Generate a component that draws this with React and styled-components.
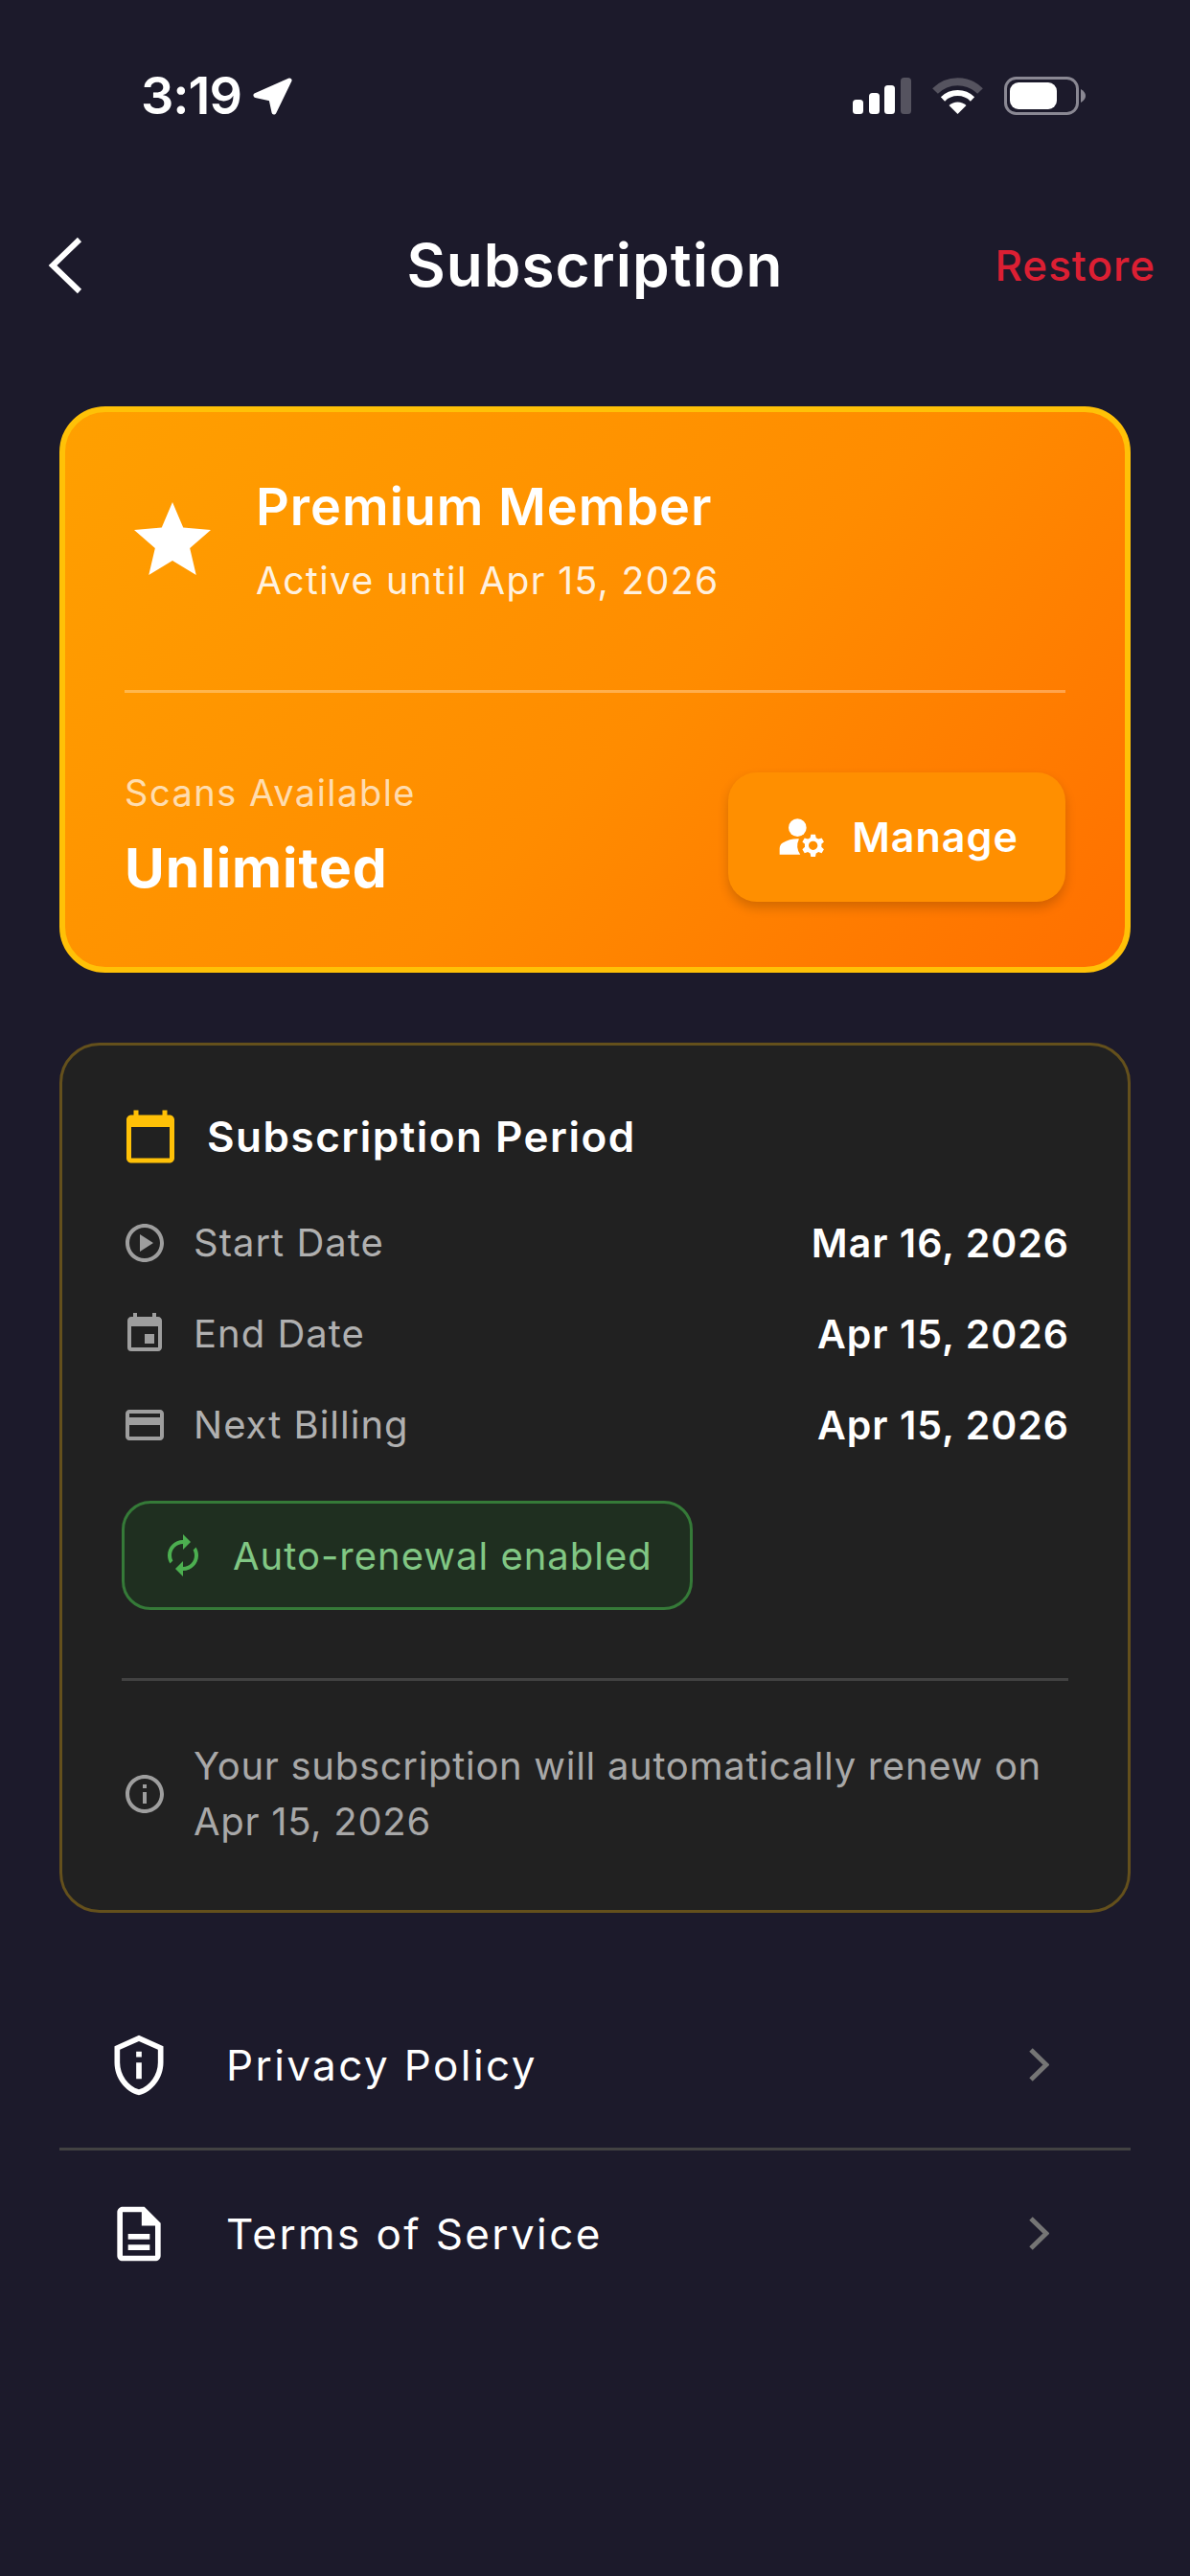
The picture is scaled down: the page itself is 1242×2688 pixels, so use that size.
import styled, { createGlobalStyle } from 'styled-components';
import {
  MdStar,
  MdManageAccounts,
  MdCalendarToday,
  MdOutlinePlayCircle,
  MdEvent,
  MdCreditCard,
  MdAutorenew,
  MdInfoOutline,
  MdOutlinePrivacyTip,
  MdOutlineDescription,
} from 'react-icons/md';

const GlobalStyle = createGlobalStyle`
  html, body {
    margin: 0;
    padding: 0;
    background: #1c1a2b;
  }
  * {
    box-sizing: border-box;
  }
`;

const periodRows = [
  { Icon: MdOutlinePlayCircle, label: 'Start Date', value: 'Mar 16, 2026' },
  { Icon: MdEvent, label: 'End Date', value: 'Apr 15, 2026' },
  { Icon: MdCreditCard, label: 'Next Billing', value: 'Apr 15, 2026' },
];

const App = () => {
  return (
    <Page>
      <GlobalStyle />
      <StatusBar>
        <TimeGroup>
          <Time>3:19</Time>
          <svg width="43" height="40" viewBox="0 0 43 40">
            <polygon
              points="38,4 3,19.5 19,23 22,37"
              fill="#fff"
              stroke="#fff"
              strokeWidth="5"
              strokeLinejoin="round"
            />
          </svg>
        </TimeGroup>
        <StatusIcons>
          <svg width="61" height="38" viewBox="0 0 61 38">
            <rect x="0" y="23" width="11" height="15" rx="3.5" fill="#fff" />
            <rect x="17" y="16" width="11" height="22" rx="3.5" fill="#fff" />
            <rect x="33" y="8" width="11" height="30" rx="3.5" fill="#fff" />
            <rect x="50" y="0" width="11" height="38" rx="3.5" fill="#55535f" />
          </svg>
          <svg width="53" height="38" viewBox="0 0 53 38">
            <path d="M3 14 A33 33 0 0 1 50 14" stroke="#55535f" strokeWidth="8" fill="none" />
            <path d="M11 22.5 A22 22 0 0 1 42 22.5" stroke="#fff" strokeWidth="6" fill="none" />
            <path d="M26.5 38 L17.5 29 A13 13 0 0 1 35.5 29 Z" fill="#fff" />
          </svg>
          <svg width="85" height="40" viewBox="0 0 85 40">
            <rect x="1.5" y="1.5" width="75" height="37" rx="11" fill="none" stroke="#8a8893" strokeWidth="3" />
            <rect x="6" y="6" width="49" height="28" rx="9" fill="#fff" />
            <path d="M80 13 Q85 16 85 20 Q85 24 80 27 Z" fill="#8a8893" />
          </svg>
        </StatusIcons>
      </StatusBar>

      <Header>
        <BackButton>
          <svg width="36" height="60" viewBox="0 0 36 60">
            <polyline points="33,3 5,30 33,57" fill="none" stroke="#fff" strokeWidth="6" />
          </svg>
        </BackButton>
        <HeaderTitle>Subscription</HeaderTitle>
        <RestoreLink>Restore</RestoreLink>
      </Header>

      <Content>
        <PremiumCard>
          <PremiumTop>
            <StarIcon size={96} color="#fff" />
            <PremiumText>
              <PremiumTitle>Premium Member</PremiumTitle>
              <PremiumSub>Active until Apr 15, 2026</PremiumSub>
            </PremiumText>
          </PremiumTop>
          <PremiumDivider />
          <PremiumBottom>
            <ScansBlock>
              <ScansLabel>Scans Available</ScansLabel>
              <ScansValue>Unlimited</ScansValue>
            </ScansBlock>
            <ManageButton>
              <MdManageAccounts size={56} color="#fff" />
              Manage
            </ManageButton>
          </PremiumBottom>
        </PremiumCard>

        <PeriodCard>
          <PeriodHeader>
            <MdCalendarToday size={60} color="#ffc107" />
            <PeriodTitle>Subscription Period</PeriodTitle>
          </PeriodHeader>
          <PeriodRows>
            {periodRows.map(({ Icon, label, value }) => (
              <PeriodRow key={label}>
                <Icon size={48} color="#9e9e9e" />
                <RowLabel>{label}</RowLabel>
                <RowValue>{value}</RowValue>
              </PeriodRow>
            ))}
          </PeriodRows>
          <RenewBadge>
            <MdAutorenew size={48} color="#4caf50" />
            Auto-renewal enabled
          </RenewBadge>
          <PeriodDivider />
          <RenewNote>
            <MdInfoOutline size={48} color="#9e9e9e" />
            <NoteText>
              Your subscription will automatically renew on
              <br />
              Apr 15, 2026
            </NoteText>
          </RenewNote>
        </PeriodCard>

        <LinkList>
          <LinkRow>
            <MdOutlinePrivacyTip size={68} color="#fff" />
            <LinkLabel>Privacy Policy</LinkLabel>
            <Chevron />
          </LinkRow>
          <LinkDivider />
          <LinkRow>
            <MdOutlineDescription size={68} color="#fff" />
            <LinkLabel>Terms of Service</LinkLabel>
            <Chevron />
          </LinkRow>
        </LinkList>
      </Content>
    </Page>
  );
};

const Chevron = () => (
  <ChevronWrap>
    <svg width="21" height="35" viewBox="0 0 21 35">
      <polyline points="2,2 18,17.5 2,33" fill="none" stroke="#757575" strokeWidth="5" />
    </svg>
  </ChevronWrap>
);

export default App;

const Page = styled.div`
  width: 1242px;
  height: 2688px;
  overflow: hidden;
  background-color: #1c1a2b;
  font-family: Inter, 'Liberation Sans', sans-serif;
  color: #fff;
`;

const StatusBar = styled.div`
  display: flex;
  align-items: center;
  justify-content: space-between;
  height: 200px;
  padding: 0 109px 0 147px;
`;

const TimeGroup = styled.div`
  display: flex;
  align-items: center;
  gap: 12px;
`;

const Time = styled.span`
  font-size: 54px;
  font-weight: 600;
  line-height: 60px;
  letter-spacing: -1px;
`;

const StatusIcons = styled.div`
  display: flex;
  align-items: center;
  gap: 22px;
`;

const Header = styled.div`
  display: grid;
  grid-template-columns: 1fr auto 1fr;
  align-items: center;
  height: 154px;
  padding: 0 38px;
`;

const BackButton = styled.div`
  display: flex;
  margin-left: 12px;
`;

const HeaderTitle = styled.h1`
  margin: 0;
  font-size: 62px;
  font-weight: 600;
  line-height: 72px;
  letter-spacing: 1px;
`;

const RestoreLink = styled.span`
  justify-self: end;
  margin-right: -2px;
  font-size: 44px;
  font-weight: 500;
  line-height: 50px;
  letter-spacing: 1px;
  color: #dc1f33;
`;

const Content = styled.div`
  display: flex;
  flex-direction: column;
  padding: 70px 62px 0;
`;

const PremiumCard = styled.div`
  height: 591px;
  padding: 67px 62px 0;
  border: 6px solid #ffc107;
  border-radius: 48px;
  background: linear-gradient(135deg, #ffa000 0%, #ff8c00 55%, #ff6f00 100%);
`;

const PremiumTop = styled.div`
  display: flex;
  align-items: center;
  gap: 39px;
`;

const StarIcon = styled(MdStar)`
  margin-left: 2px;
`;

const PremiumText = styled.div`
  display: flex;
  flex-direction: column;
  gap: 20px;
`;

const PremiumTitle = styled.div`
  font-size: 54px;
  font-weight: 600;
  line-height: 64px;
  letter-spacing: 1px;
`;

const PremiumSub = styled.div`
  font-size: 39px;
  font-weight: 400;
  line-height: 50px;
  letter-spacing: 1.4px;
  color: rgba(255, 255, 255, 0.9);
`;

const PremiumDivider = styled.div`
  height: 3px;
  margin-top: 89px;
  background-color: rgba(255, 255, 255, 0.3);
`;

const PremiumBottom = styled.div`
  display: flex;
  align-items: center;
  justify-content: space-between;
  margin-top: 79px;
`;

const ScansBlock = styled.div`
  display: flex;
  flex-direction: column;
  gap: 22px;
  padding-bottom: 6px;
`;

const ScansLabel = styled.div`
  font-size: 38px;
  line-height: 50px;
  letter-spacing: 1.5px;
  color: rgba(255, 255, 255, 0.7);
`;

const ScansValue = styled.div`
  font-size: 57px;
  font-weight: 700;
  line-height: 64px;
  letter-spacing: 1px;
`;

const ManageButton = styled.div`
  display: flex;
  align-items: center;
  justify-content: center;
  gap: 24px;
  width: 352px;
  height: 135px;
  border-radius: 30px;
  background-color: #ff8f00;
  box-shadow: 0 6px 12px rgba(0, 0, 0, 0.18);
  font-size: 43px;
  font-weight: 600;
  letter-spacing: 1px;
`;

const PeriodCard = styled.div`
  margin-top: 73px;
  padding: 65px 62px 63px;
  border: 3px solid #64501c;
  border-radius: 42px;
  background-color: #212121;
`;

const PeriodHeader = styled.div`
  display: flex;
  align-items: center;
  gap: 29px;
`;

const PeriodTitle = styled.div`
  font-size: 44px;
  font-weight: 600;
  line-height: 60px;
  letter-spacing: 1.5px;
`;

const PeriodRows = styled.div`
  margin-top: 33px;
`;

const PeriodRow = styled.div`
  display: flex;
  align-items: center;
  gap: 27px;
  height: 95px;
`;

const RowLabel = styled.span`
  flex: 1;
  font-size: 40px;
  letter-spacing: 1px;
  color: #b0b0b0;
`;

const RowValue = styled.span`
  margin-right: -1px;
  font-size: 41px;
  font-weight: 600;
  letter-spacing: 1px;
`;

const RenewBadge = styled.div`
  display: inline-flex;
  align-items: center;
  gap: 28px;
  width: 596px;
  height: 114px;
  margin-top: 32px;
  padding-left: 37px;
  border: 3px solid #357a38;
  border-radius: 30px;
  background-color: #1f2f20;
  font-size: 40px;
  font-weight: 400;
  letter-spacing: 1px;
  color: #81c784;
`;

const PeriodDivider = styled.div`
  height: 3px;
  margin-top: 71px;
  background-color: #424242;
`;

const RenewNote = styled.div`
  display: flex;
  align-items: center;
  gap: 27px;
  margin-top: 60px;
`;

const NoteText = styled.div`
  font-size: 40px;
  line-height: 58px;
  letter-spacing: 0.7px;
  color: #a8a8a8;
`;

const LinkList = styled.div`
  margin-top: 72px;
`;

const LinkRow = styled.div`
  display: flex;
  align-items: center;
  gap: 57px;
  height: 173px;
  padding: 0 85px 0 49px;
`;

const LinkLabel = styled.span`
  flex: 1;
  font-size: 44px;
  letter-spacing: 2.4px;
`;

const ChevronWrap = styled.span`
  display: flex;
`;

const LinkDivider = styled.div`
  height: 3px;
  background-color: #424242;
`;
